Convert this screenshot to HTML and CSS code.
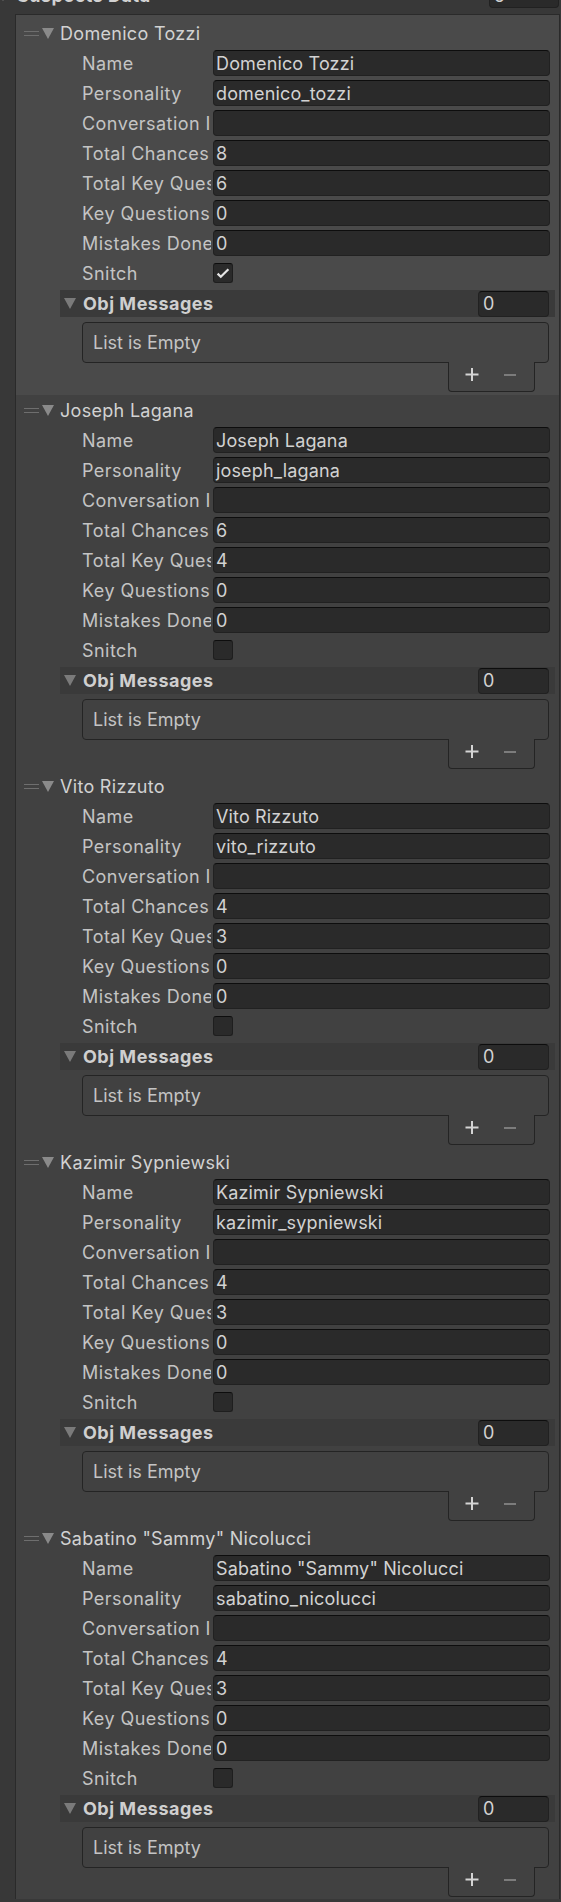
FILE: index.html
```html
<!DOCTYPE html>
<html lang="en">
<head>
<meta charset="utf-8">
<title>Suspects Data</title>
<link rel="stylesheet" href="styles.css">
</head>
<body>
<div class="inspector">
  <div class="root-row">
    <span class="fold fold-root"></span>
    <span class="root-title">Suspects Data</span>
    <span class="count-field root-count">5</span>
  </div>

  <div class="list-panel">

    <div class="element is-hover">
      <div class="el-header"><span class="handle"></span><span class="fold"></span><span class="el-title">Domenico Tozzi</span></div>
      <div class="prop"><span class="label">Name</span><span class="field">Domenico Tozzi</span></div>
      <div class="prop"><span class="label">Personality</span><span class="field">domenico_tozzi</span></div>
      <div class="prop"><span class="label">Conversation ID</span><span class="field"></span></div>
      <div class="prop"><span class="label">Total Chances</span><span class="field">8</span></div>
      <div class="prop"><span class="label">Total Key Questions</span><span class="field">6</span></div>
      <div class="prop"><span class="label">Key Questions Asked</span><span class="field">0</span></div>
      <div class="prop"><span class="label">Mistakes Done</span><span class="field">0</span></div>
      <div class="prop"><span class="label">Snitch</span><span class="checkbox"><svg width="20" height="20" viewBox="0 0 20 20"><path d="M4.6 10.6 L7.8 13.8 L15.4 6.2" fill="none" stroke="#e4e4e4" stroke-width="2.2"/></svg></span></div>
      <div class="sub-header"><span class="fold fold-sub"></span><span class="sub-title">Obj Messages</span><span class="count-field sub-count">0</span></div>
      <div class="sub-list">
        <div class="list-box">List is Empty</div>
        <div class="list-footer">
          <svg class="btn-plus" width="14" height="14" viewBox="0 0 14 14"><path d="M7 0 V13 M0.5 6.5 H13.5" stroke="#d4d4d4" stroke-width="2"/></svg>
          <svg class="btn-minus" width="12" height="14" viewBox="0 0 12 14"><path d="M0 7 H12" stroke="#7c7c7c" stroke-width="2"/></svg>
        </div>
      </div>
    </div>

    <div class="element">
      <div class="el-header"><span class="handle"></span><span class="fold"></span><span class="el-title">Joseph Lagana</span></div>
      <div class="prop"><span class="label">Name</span><span class="field">Joseph Lagana</span></div>
      <div class="prop"><span class="label">Personality</span><span class="field">joseph_lagana</span></div>
      <div class="prop"><span class="label">Conversation ID</span><span class="field"></span></div>
      <div class="prop"><span class="label">Total Chances</span><span class="field">6</span></div>
      <div class="prop"><span class="label">Total Key Questions</span><span class="field">4</span></div>
      <div class="prop"><span class="label">Key Questions Asked</span><span class="field">0</span></div>
      <div class="prop"><span class="label">Mistakes Done</span><span class="field">0</span></div>
      <div class="prop"><span class="label">Snitch</span><span class="checkbox"></span></div>
      <div class="sub-header"><span class="fold fold-sub"></span><span class="sub-title">Obj Messages</span><span class="count-field sub-count">0</span></div>
      <div class="sub-list">
        <div class="list-box">List is Empty</div>
        <div class="list-footer">
          <svg class="btn-plus" width="14" height="14" viewBox="0 0 14 14"><path d="M7 0 V13 M0.5 6.5 H13.5" stroke="#d4d4d4" stroke-width="2"/></svg>
          <svg class="btn-minus" width="12" height="14" viewBox="0 0 12 14"><path d="M0 7 H12" stroke="#7c7c7c" stroke-width="2"/></svg>
        </div>
      </div>
    </div>

    <div class="element">
      <div class="el-header"><span class="handle"></span><span class="fold"></span><span class="el-title">Vito Rizzuto</span></div>
      <div class="prop"><span class="label">Name</span><span class="field">Vito Rizzuto</span></div>
      <div class="prop"><span class="label">Personality</span><span class="field">vito_rizzuto</span></div>
      <div class="prop"><span class="label">Conversation ID</span><span class="field"></span></div>
      <div class="prop"><span class="label">Total Chances</span><span class="field">4</span></div>
      <div class="prop"><span class="label">Total Key Questions</span><span class="field">3</span></div>
      <div class="prop"><span class="label">Key Questions Asked</span><span class="field">0</span></div>
      <div class="prop"><span class="label">Mistakes Done</span><span class="field">0</span></div>
      <div class="prop"><span class="label">Snitch</span><span class="checkbox"></span></div>
      <div class="sub-header"><span class="fold fold-sub"></span><span class="sub-title">Obj Messages</span><span class="count-field sub-count">0</span></div>
      <div class="sub-list">
        <div class="list-box">List is Empty</div>
        <div class="list-footer">
          <svg class="btn-plus" width="14" height="14" viewBox="0 0 14 14"><path d="M7 0 V13 M0.5 6.5 H13.5" stroke="#d4d4d4" stroke-width="2"/></svg>
          <svg class="btn-minus" width="12" height="14" viewBox="0 0 12 14"><path d="M0 7 H12" stroke="#7c7c7c" stroke-width="2"/></svg>
        </div>
      </div>
    </div>

    <div class="element">
      <div class="el-header"><span class="handle"></span><span class="fold"></span><span class="el-title">Kazimir Sypniewski</span></div>
      <div class="prop"><span class="label">Name</span><span class="field">Kazimir Sypniewski</span></div>
      <div class="prop"><span class="label">Personality</span><span class="field">kazimir_sypniewski</span></div>
      <div class="prop"><span class="label">Conversation ID</span><span class="field"></span></div>
      <div class="prop"><span class="label">Total Chances</span><span class="field">4</span></div>
      <div class="prop"><span class="label">Total Key Questions</span><span class="field">3</span></div>
      <div class="prop"><span class="label">Key Questions Asked</span><span class="field">0</span></div>
      <div class="prop"><span class="label">Mistakes Done</span><span class="field">0</span></div>
      <div class="prop"><span class="label">Snitch</span><span class="checkbox"></span></div>
      <div class="sub-header"><span class="fold fold-sub"></span><span class="sub-title">Obj Messages</span><span class="count-field sub-count">0</span></div>
      <div class="sub-list">
        <div class="list-box">List is Empty</div>
        <div class="list-footer">
          <svg class="btn-plus" width="14" height="14" viewBox="0 0 14 14"><path d="M7 0 V13 M0.5 6.5 H13.5" stroke="#d4d4d4" stroke-width="2"/></svg>
          <svg class="btn-minus" width="12" height="14" viewBox="0 0 12 14"><path d="M0 7 H12" stroke="#7c7c7c" stroke-width="2"/></svg>
        </div>
      </div>
    </div>

    <div class="element">
      <div class="el-header"><span class="handle"></span><span class="fold"></span><span class="el-title">Sabatino "Sammy" Nicolucci</span></div>
      <div class="prop"><span class="label">Name</span><span class="field">Sabatino "Sammy" Nicolucci</span></div>
      <div class="prop"><span class="label">Personality</span><span class="field">sabatino_nicolucci</span></div>
      <div class="prop"><span class="label">Conversation ID</span><span class="field"></span></div>
      <div class="prop"><span class="label">Total Chances</span><span class="field">4</span></div>
      <div class="prop"><span class="label">Total Key Questions</span><span class="field">3</span></div>
      <div class="prop"><span class="label">Key Questions Asked</span><span class="field">0</span></div>
      <div class="prop"><span class="label">Mistakes Done</span><span class="field">0</span></div>
      <div class="prop"><span class="label">Snitch</span><span class="checkbox"></span></div>
      <div class="sub-header"><span class="fold fold-sub"></span><span class="sub-title">Obj Messages</span><span class="count-field sub-count">0</span></div>
      <div class="sub-list">
        <div class="list-box">List is Empty</div>
        <div class="list-footer">
          <svg class="btn-plus" width="14" height="14" viewBox="0 0 14 14"><path d="M7 0 V13 M0.5 6.5 H13.5" stroke="#d4d4d4" stroke-width="2"/></svg>
          <svg class="btn-minus" width="12" height="14" viewBox="0 0 12 14"><path d="M0 7 H12" stroke="#7c7c7c" stroke-width="2"/></svg>
        </div>
      </div>
    </div>

  </div>
</div>
</body>
</html>
```

FILE: styles.css
```css
* { box-sizing: border-box; }

html, body {
  margin: 0;
  padding: 0;
}

body {
  width: 561px;
  height: 1902px;
  overflow: hidden;
  background: #383838;
  font-family: Inter, "Noto Sans", sans-serif;
  font-size: 18px;
  letter-spacing: 0.3px;
  color: #c4c4c4;
}

.inspector {
  display: flex;
  flex-direction: column;
}

/* ---------- top array header (mostly scrolled out) ---------- */
.root-row {
  display: flex;
  align-items: center;
  height: 26px;
  margin-top: -18px;
}

.fold {
  flex: none;
  width: 0;
  height: 0;
  border-left: 6px solid transparent;
  border-right: 6px solid transparent;
  border-top: 11px solid #8a8a8a;
}

.fold-root { margin-left: -3px; }

.root-title {
  margin-left: 8px;
  font-weight: 700;
  letter-spacing: 0.5px;
  color: #d2d2d2;
  white-space: nowrap;
}

.count-field {
  flex: none;
  display: flex;
  align-items: center;
  height: 26px;
  padding-left: 4px;
  background: #2a2a2a;
  border: 1px solid #212121;
  border-top-color: #0d0d0d;
  border-radius: 4px;
  color: #d2d2d2;
}

.root-count {
  margin-left: auto;
  margin-right: 2px;
  width: 70px;
}

/* ---------- reorderable list ---------- */
.list-panel {
  margin: 6px 0 0 15px;
  width: 545px;
  border: 1px solid #2a2a2a;
  border-bottom: 0;
  background: #414141;
}

.element {
  display: flex;
  flex-direction: column;
  gap: 4px;
  padding: 2px 0;
  background: #414141;
}

.element.is-hover {
  padding: 5px 0 3px;
  background: #4a4a4a;
}

.el-header {
  display: flex;
  align-items: center;
  height: 26px;
  padding-left: 8px;
}

.handle {
  flex: none;
  width: 15px;
  height: 5px;
  border-top: 1px solid #6e6e6e;
  border-bottom: 1px solid #6e6e6e;
}

.el-header .fold { margin-left: 3px; }

.el-title {
  margin-left: 6px;
  color: #d2d2d2;
  white-space: nowrap;
}

.prop {
  display: flex;
  align-items: center;
  height: 26px;
  padding: 0 9px 0 66px;
}

.label {
  flex: none;
  width: 129px;
  overflow: hidden;
  white-space: nowrap;
  letter-spacing: 0.45px;
}

.field {
  flex: 1;
  display: flex;
  align-items: center;
  height: 26px;
  margin-left: 2px;
  padding-left: 2px;
  overflow: hidden;
  white-space: nowrap;
  letter-spacing: 0.15px;
  background: #2a2a2a;
  border: 1px solid #212121;
  border-top-color: #0d0d0d;
  border-radius: 4px;
  color: #d2d2d2;
}

.checkbox {
  flex: none;
  display: flex;
  width: 20px;
  height: 20px;
  margin-left: 2px;
  background: #2a2a2a;
  border: 1px solid #1e1e1e;
  border-top-color: #0d0d0d;
  border-radius: 3px;
}

.checkbox svg {
  margin: -1px;
}

/* ---------- nested "Obj Messages" array ---------- */
.sub-header {
  display: flex;
  align-items: center;
  height: 27px;
  margin: 0 4px 0 44px;
  background: #3a3a3a;
}

.fold-sub {
  margin-left: 4px;
  border-top-color: #7a7a7a;
}

.sub-title {
  margin-left: 7px;
  font-weight: 700;
  letter-spacing: 0.5px;
  color: #cfcfcf;
}

.sub-count {
  margin-left: auto;
  margin-right: 6px;
  width: 71px;
}

.sub-list {
  display: flex;
  flex-direction: column;
  margin-top: 1px;
}

.list-box {
  display: flex;
  align-items: center;
  height: 41px;
  margin: 0 10px 0 66px;
  padding-left: 10px;
  background: #414141;
  border: 1px solid #242424;
  border-radius: 4px;
  letter-spacing: 0;
  color: #c4c4c4;
}

.is-hover .list-box,
.is-hover .list-footer {
  background: #454545;
}

.list-footer {
  align-self: flex-end;
  display: flex;
  align-items: flex-start;
  width: 87px;
  height: 30px;
  margin: -1px 24px 0 0;
  padding: 6px 0 0 16px;
  background: #414141;
  border: 1px solid #242424;
  border-top: 0;
  border-radius: 0 0 4px 4px;
}

.btn-minus {
  margin-left: 25px;
}
```
